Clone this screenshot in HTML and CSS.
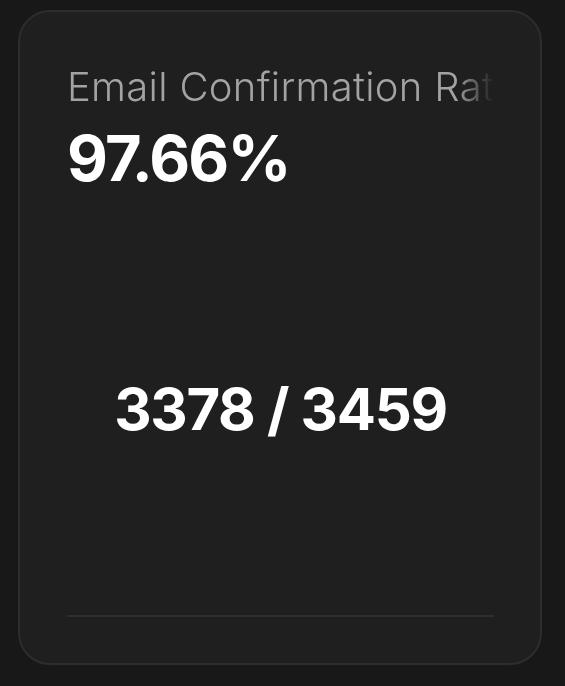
FILE: index.html
```html
<!DOCTYPE html>
<html lang="en">
  <head>
    <meta charset="UTF-8" />
    <meta name="viewport" content="width=device-width, initial-scale=1.0" />
    <title>Email Confirmation Rate</title>
    <link rel="stylesheet" href="styles.css">
  </head>
  <body>
    <div class="page">
      <div class="stat-card">
        <div class="stat-title">Email Confirmation Rate</div>
        <div class="stat-value">97.66%</div>
        <div class="stat-body">
          <span class="stat-fraction">3378 / 3459</span>
        </div>
        <hr class="stat-divider" />
      </div>
    </div>
  </body>
</html>
```

FILE: styles.css
```css
html,
body {
  height: 100%;
}
body {
  margin: 0;
  background-color: #181818;
  font-family: Inter, "Noto Sans", sans-serif;
  color: #ffffff;
}
.page {
  box-sizing: border-box;
  height: 100%;
  padding: 10px 23px 21px 18px;
}
.stat-card {
  box-sizing: border-box;
  height: 100%;
  display: flex;
  flex-direction: column;
  background: #1f1f1f;
  border: 2px solid #2d2d2d;
  border-radius: 32px;
  padding: 51px 46px 46px 47px;
}
.stat-title {
  font-size: 40px;
  line-height: 48px;
  font-weight: 300;
  letter-spacing: 0.3px;
  color: #a3a3a3;
  white-space: nowrap;
  overflow: hidden;
  -webkit-mask-image: linear-gradient(to right, #000 91%, transparent);
  mask-image: linear-gradient(to right, #000 91%, transparent);
}
.stat-value {
  margin-top: 13px;
  font-size: 63px;
  line-height: 69px;
  font-weight: 700;
  letter-spacing: -1.8px;
}
.stat-body {
  flex: 1;
  display: flex;
  align-items: center;
  justify-content: center;
}
.stat-fraction {
  font-size: 58px;
  font-weight: 700;
  letter-spacing: -1.3px;
  margin-top: 10px;
}
.stat-divider {
  margin: 0;
  border: none;
  height: 2px;
  background: #2e2e2e;
}
```
